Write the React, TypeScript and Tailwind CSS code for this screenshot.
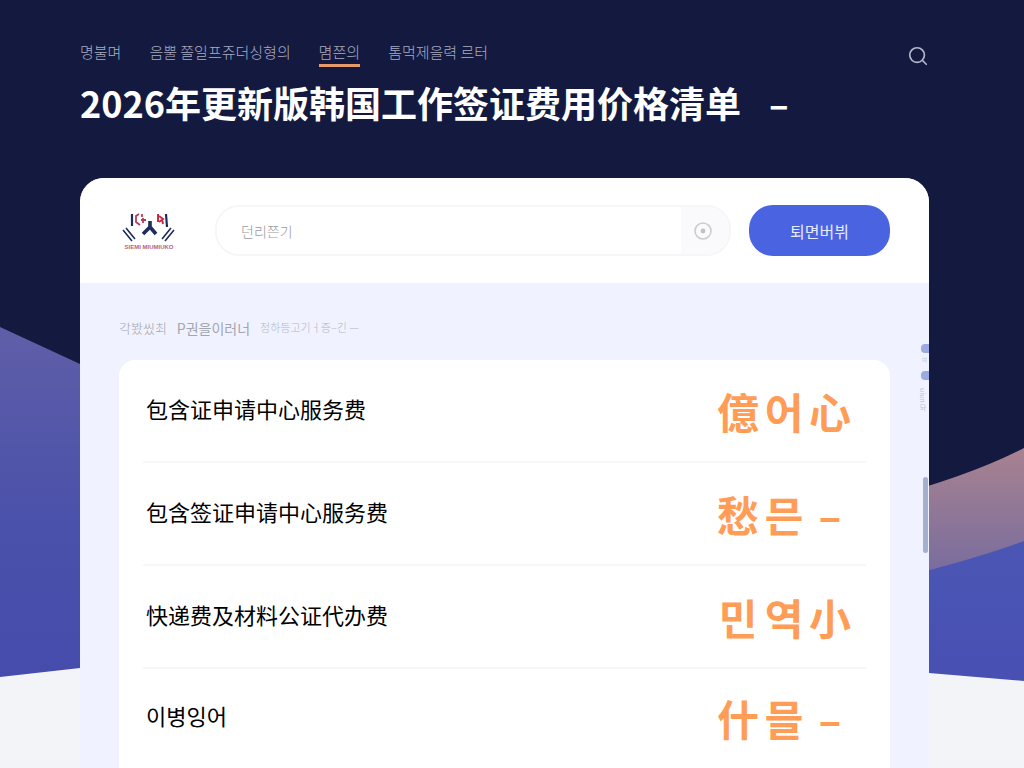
import { Search } from "lucide-react";

const menuData = [
  { label: "명불며", path: "#inicio", active: false },
  { label: "음뿔 쫄일프쥬더싱형의", path: "#visa", active: false },
  { label: "몀쯘의", path: "#precios", active: true },
  { label: "톰먹제을력 르터", path: "#contacto", active: false },
];

const feeData = [
  { label: "包含证申请中心服务费", value: ["億", "어", "心"] },
  { label: "包含签证申请中心服务费", value: ["愁", "믄", "–"] },
  { label: "快递费及材料公证代办费", value: ["민", "역", "小"] },
  { label: "이병잉어", value: ["什", "믈", "–"] },
];

const Background = () => (
  <svg
    className="absolute inset-0 h-full w-full"
    viewBox="0 0 1024 768"
    preserveAspectRatio="none"
    aria-hidden="true"
  >
    <defs>
      <linearGradient id="left" x1="0" y1="0" x2="0" y2="1">
        <stop offset="0" stopColor="#5f5ea8" />
        <stop offset="0.45" stopColor="#4a51aa" />
        <stop offset="1" stopColor="#4249ae" />
      </linearGradient>
      <linearGradient id="pink" x1="0" y1="0" x2="0" y2="1">
        <stop offset="0" stopColor="#a88290" />
        <stop offset="0.75" stopColor="#776c9e" />
      </linearGradient>
      <linearGradient id="right" x1="0" y1="0" x2="0" y2="1">
        <stop offset="0" stopColor="#4b56b4" />
        <stop offset="1" stopColor="#464db2" />
      </linearGradient>
    </defs>
    <path d="M0 327 L80 364 L300 470 V768 H0 Z" fill="url(#left)" />
    <path d="M880 500 Q970 476 1024 448 V620 H880 Z" fill="url(#pink)" />
    <path d="M880 582 Q960 564 1024 541 V768 H880 Z" fill="url(#right)" />
    <path d="M0 677 L80 668 Q500 640 929 673 L1024 681 V768 H0 Z" fill="#f3f4f7" />
  </svg>
);

const Logo = () => (
  <svg className="h-10 w-14 shrink-0" viewBox="0 0 56 40" role="img" aria-label="Logo">
    <g fill="none" stroke="#1f2b5c" strokeWidth="1.6">
      <path d="M13 3v12M47 3l1 13" strokeWidth="2.2" />
      <path d="M4 19l9 11M7 17l9 11M55 19l-9 11M52 17l-9 11" />
      <path d="M31 10v6l-7 7M31 16l6 7" strokeWidth="3.6" />
    </g>
    <g fill="none" stroke="#c92d43">
      <path d="M20 3l-3 2v6l4 3M23 3v3M22 9h5M24 7v5" stroke="#b53b5b" strokeWidth="1.8" />
      <path d="M39 3v8M40 5l4 3-4 3M43 8l1 5" strokeWidth="2" />
    </g>
    <text
      x="30"
      y="38"
      textAnchor="middle"
      fill="#b8627a"
      className="font-['Liberation_Sans'] text-[6px] font-bold"
    >
      SIEMI MIUMIUKO
    </text>
  </svg>
);

const TargetIcon = () => (
  <svg className="size-5" viewBox="0 0 20 20" fill="none" aria-hidden="true">
    <circle cx="10" cy="10" r="8" stroke="#cbccd1" strokeWidth="1.6" />
    <circle cx="10" cy="10" r="2.4" fill="#c0c1c7" />
  </svg>
);

const SideRail = () => (
  <div className="absolute right-0 top-[166px] flex flex-col items-end" aria-hidden="true">
    <span className="h-[9px] w-2 rounded-l-sm bg-[#9aabe0]" />
    <span className="h-[18px] pt-1 text-[6px] leading-[10px] text-[#c5cadb] [writing-mode:vertical-rl]">
      여
    </span>
    <span className="h-[9px] w-2 rounded-l-sm bg-[#9aabe0]" />
    <span className="h-10 pt-2 text-[7px] leading-[12px] text-[#b9bfd2] [writing-mode:vertical-rl]">
      uiun 돠
    </span>
    <span className="mr-px mt-[57px] h-[76px] w-[5px] rounded-full bg-[#a3b0ce]" />
  </div>
);

const App = () => {
  return (
    <div className="relative flex min-h-screen flex-col overflow-hidden bg-[#141a3f] pl-20 pr-[95px] font-['Noto_Sans_CJK_SC','Noto_Sans_CJK_KR',sans-serif]">
      <Background />

      <header className="relative pt-10">
        <div className="flex items-center justify-between">
          <nav className="flex gap-7 font-['Noto_Sans_CJK_KR',sans-serif] text-[15px] font-light leading-6 text-[#a9abc0]">
            {menuData.map(({ label, path, active }) => (
              <a
                key={path}
                href={path}
                className={
                  active
                    ? "border-b-3 border-[#e89a68]"
                    : "border-b-3 border-transparent"
                }
              >
                {label}
              </a>
            ))}
          </nav>
          <button type="button" aria-label="Buscar" className="pt-1 text-[#b5b8cc]">
            <Search className="size-[22px]" strokeWidth={1.8} />
          </button>
        </div>
        <h1 className="mt-[10px] flex gap-7 text-4xl font-bold leading-[50px] text-white">
          <span>2026年更新版韩国工作签证费用价格清单</span>
          <span>–</span>
        </h1>
      </header>

      <main className="relative mt-[51px] flex flex-1 flex-col overflow-hidden rounded-t-3xl bg-[#f0f3ff]">
        {/* Barra de búsqueda */}
        <form
          className="flex h-[105px] items-center bg-white px-[39px]"
          onSubmit={(e) => e.preventDefault()}
        >
          <Logo />
          <div className="ml-10 flex h-[51px] flex-1 overflow-hidden rounded-3xl border-2 border-[#f6f6f8]">
            <input
              type="text"
              aria-label="던리쯘기"
              placeholder="던리쯘기"
              className="min-w-0 flex-1 bg-white px-6 font-['Noto_Sans_CJK_KR',sans-serif] text-sm font-light outline-none placeholder:text-[#98989e]"
            />
            <button
              type="submit"
              aria-label="Buscar"
              className="flex w-12 items-center justify-center bg-[#fafafc] pr-1"
            >
              <TargetIcon />
            </button>
          </div>
          <button
            type="button"
            className="ml-[18px] h-[51px] w-[141px] rounded-3xl bg-[#4a63e0] font-['Noto_Sans_CJK_KR',sans-serif] text-base text-[#e6eaff]"
          >
            퇴면버뷔
          </button>
        </form>

        <div className="flex flex-1 flex-col px-[39px]">
          <p className="flex h-[77px] items-center gap-[10px] pt-3 font-['Noto_Sans_CJK_KR',sans-serif] font-light text-[#a3a5af]">
            <span className="text-[13px]">각봤씼최</span>
            <span className="text-sm font-normal">P권을이러너</span>
            <span className="text-[11px] text-[#b3b5bf]">정하등고기ㅓ증–긴 —</span>
          </p>

          {/* Lista de precios */}
          <ul className="flex-1 rounded-t-2xl bg-white px-6">
            {feeData.map(({ label, value }) => (
              <li
                key={label}
                className="flex h-[103px] items-center justify-between border-b-2 border-[#f7f7f9] pb-1 pl-[3px] pr-[14px] last:h-[99px] last:border-transparent"
              >
                <span className="text-[22px] text-black">{label}</span>
                <span className="grid grid-cols-3 gap-[2px] pt-1 text-center text-[42px] font-bold leading-[50px] text-[#ff9d57]">
                  {value.map((part, i) => (
                    <span key={i} className="w-11">
                      {part}
                    </span>
                  ))}
                </span>
              </li>
            ))}
          </ul>
        </div>

        <SideRail />
      </main>
    </div>
  );
};

export default App;
